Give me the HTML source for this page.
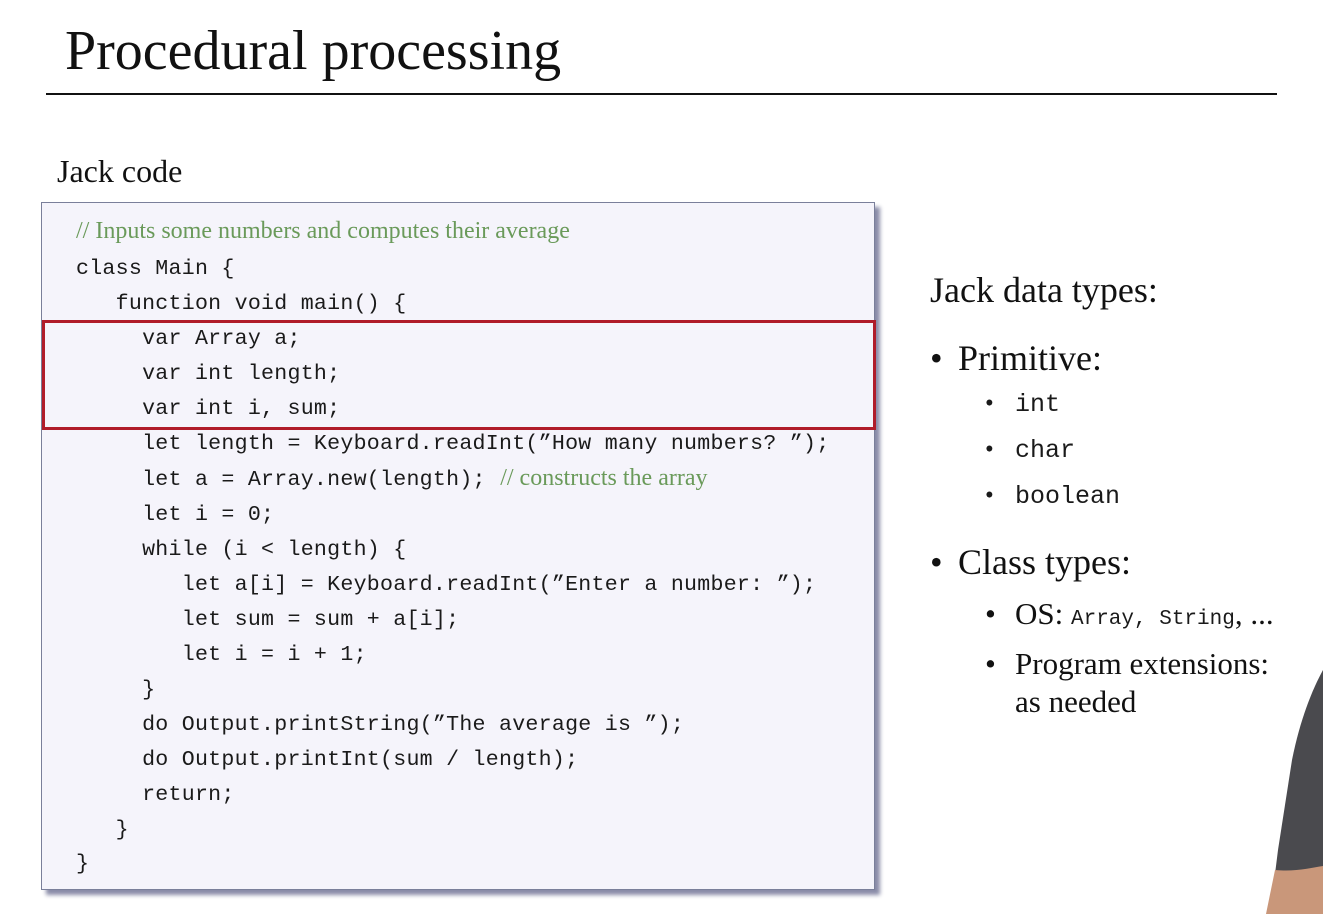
<!DOCTYPE html>
<html><head><meta charset="utf-8"><style>
body{margin:0;width:1323px;height:914px;background:#fff;position:relative;overflow:hidden;font-family:"Liberation Serif",serif;color:#111}
.a{position:absolute;white-space:pre}
.box{position:absolute;left:41px;top:202px;width:832px;height:686px;background:#f5f4fb;border:1px solid #7a7f9a;box-shadow:5px 5px 4px #8a8ca8}
.code{font-family:"Liberation Mono",monospace;font-size:21.6px;color:#1a1a1a;letter-spacing:0.26px}
.c{font-family:"Liberation Serif",serif;color:#6a9a5a;font-size:24px;letter-spacing:0}
.b{display:inline-block;width:28px}
.sb{display:inline-block;width:30px;font-family:"Liberation Serif",serif}
</style></head><body>
<div class="a" style="left:65px;top:19px;font-size:56px">Procedural processing</div>
<div style="position:absolute;left:46px;top:93px;width:1231px;height:2px;background:#111"></div>
<div class="a" style="left:57px;top:153px;font-size:32px">Jack code</div>
<div class="box"></div>
<div style="position:absolute;left:42px;top:320px;width:828px;height:104px;border:3px solid #b01c2a"></div>
<div class="a c" style="left:76px;top:218px">// Inputs some numbers and computes their average</div>
<div class="a code" style="left:76px;top:252px;line-height:34.9px">class Main {
   function void main() {
     var Array a;
     var int length;
     var int i, sum;
     let length = Keyboard.readInt(”How many numbers? ”);
     let a = Array.new(length);  <span class="c" style="margin-left:-12px">// constructs the array</span>
     let i = 0;
     while (i &lt; length) {
        let a[i] = Keyboard.readInt(”Enter a number: ”);
        let sum = sum + a[i];
        let i = i + 1;
     }
     do Output.printString(”The average is ”);
     do Output.printInt(sum / length);
     return;
   }
}</div>
<div class="a" style="left:930px;top:269px;font-size:36px">Jack data types:</div>
<div class="a" style="left:930px;top:337px;font-size:36px"><span class="b">•</span>Primitive:</div>
<div class="a code" style="left:985px;top:390px;font-size:25px;letter-spacing:0"><span class="sb">•</span>int</div>
<div class="a code" style="left:985px;top:436px;font-size:25px;letter-spacing:0"><span class="sb">•</span>char</div>
<div class="a code" style="left:985px;top:482px;font-size:25px;letter-spacing:0"><span class="sb">•</span>boolean</div>
<div class="a" style="left:930px;top:541px;font-size:36px"><span class="b">•</span>Class types:</div>
<div class="a" style="left:985px;top:596px;font-size:31px"><span class="sb">•</span>OS: <span class="code" style="font-size:21px;letter-spacing:0">Array, String</span>, ...</div>
<div class="a" style="left:985px;top:646px;font-size:31px"><span class="sb">•</span>Program extensions:</div>
<div class="a" style="left:1015px;top:684px;font-size:31px">as needed</div>
<svg style="position:absolute;left:0;top:0" width="1323" height="914">
<path d="M1323 670 C1312 690 1300 720 1292 760 L1278 850 L1270 914 L1323 914Z" fill="#4a4a4e"/>
<path d="M1275 870 C1295 872 1310 868 1323 866 L1323 914 L1266 914Z" fill="#c9977a"/>
</svg>
</body></html>
